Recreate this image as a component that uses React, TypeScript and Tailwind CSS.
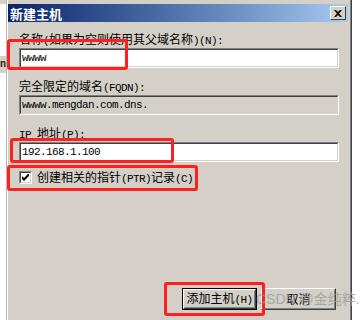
import React from "react";

const CJK = "font-['Noto_Sans_CJK_SC','Noto_Sans_CJK_JP',sans-serif]";

const Lat = ({ children }: { children: React.ReactNode }) => (
  <span className="font-['Liberation_Mono',monospace] text-[11px] tracking-[-0.6px]">{children}</span>
);

const Label = ({ children, className = "" }: { children: React.ReactNode; className?: string }) => (
  <div className={`${CJK} text-[12px] leading-[12px] h-[12px] text-black whitespace-nowrap ${className}`}>
    {children}
  </div>
);

const Field = ({
  value,
  disabled = false,
  className = "",
}: {
  value: string;
  disabled?: boolean;
  className?: string;
}) => (
  <div
    className={`w-[320px] h-[20px] border border-t-[#808080] border-l-[#808080] border-b-white border-r-white ${className}`}
  >
    <div
      className={`w-full h-full border border-t-[#404040] border-l-[#404040] border-b-[#d4d0c8] border-r-[#d4d0c8] ${
        disabled ? "bg-[#d4d0c8]" : "bg-white"
      } flex items-center pl-[1px]`}
    >
      <span className="font-['Liberation_Mono',monospace] text-[11px] tracking-[-0.6px] leading-[12px] text-black whitespace-nowrap">
        {value}
      </span>
    </div>
  </div>
);

export default function App() {
  return (
    <div className="relative w-[361px] h-[320px] bg-white overflow-hidden flex">
      {/* background window strip */}
      <div className="w-[7px] h-full flex flex-col bg-white border-r border-r-[#b8b8b8]">
        <div className="h-[4px] bg-[#d4d0c8]" />
        <div className="h-[52px]" />
        <div className="h-[17px] bg-[#d4d0c8] overflow-hidden flex items-center justify-end">
          <span className="font-['Liberation_Mono',monospace] text-[10px] font-bold text-[#202020] leading-[10px]">n</span>
        </div>
      </div>

      {/* dialog */}
      <div className="w-[345px] h-[340px] bg-[#d4d0c8] border-r border-r-[#404040]">
        <div className="w-full h-full border-l border-l-white border-r border-r-[#808080] pt-[4px] pr-[1px]">
          {/* title bar */}
          <div className="h-[18px] w-[340px] bg-gradient-to-r from-[#0a246a] to-[#a6caf0] flex items-center justify-between pl-[2px] pr-[2px]">
            <span className={`${CJK} text-[13px] leading-[13px] font-bold text-white`}>新建主机</span>
            <div className="w-[16px] h-[14px] bg-[#d4d0c8] border border-t-white border-l-white border-b-[#404040] border-r-[#404040] flex items-center justify-center">
              <svg width="8" height="7" viewBox="0 0 8 7">
                <path d="M0 0h2l2 2 2-2h2l-3 3.5 3 3.5h-2l-2-2-2 2h-2l3-3.5z" fill="#000" />
              </svg>
            </div>
          </div>

          {/* body */}
          <div className="pl-[11px] flex flex-col">
            <Label className="mt-[11px]">
              名称<Lat>(</Lat>如果为空则使用其父域名称<Lat>)(N):</Lat>
            </Label>
            <Field value="wwww" className="mt-[3px]" />

            <Label className="mt-[12px]">
              完全限定的域名<Lat>(FQDN):</Lat>
            </Label>
            <Field value="wwww.mengdan.com.dns." disabled className="mt-[3px]" />

            <Label className="mt-[12px]">
              <Lat>IP </Lat>地址<Lat>(P):</Lat>
            </Label>
            <Field value="192.168.1.100" className="mt-[3px]" />

            <div className="mt-[9px] flex items-center h-[13px]">
              <div className="w-[13px] h-[13px] border border-t-[#808080] border-l-[#808080] border-b-white border-r-white">
                <div className="w-full h-full bg-white border border-t-[#404040] border-l-[#404040] border-b-[#d4d0c8] border-r-[#d4d0c8] flex items-center justify-center">
                  <svg width="7" height="7" viewBox="0 0 7 7">
                    <path d="M0 2v3l2 2 5-5v-3l-5 5z" fill="#000" />
                  </svg>
                </div>
              </div>
              <span className={`${CJK} ml-[5px] text-[12px] leading-[12px] text-black whitespace-nowrap`}>
                创建相关的指针<Lat>(PTR)</Lat>记录<Lat>(C)</Lat>
              </span>
            </div>

            <div className="mt-[104px] ml-[163px] flex gap-[4px]">
              <div className="w-[75px] h-[22px] border border-black">
                <div className="w-full h-full border border-t-white border-l-white border-b-[#404040] border-r-[#404040]">
                  <div className="w-full h-full border border-t-[#d4d0c8] border-l-[#d4d0c8] border-b-[#808080] border-r-[#808080] flex items-center justify-center">
                    <span className={`${CJK} text-[12px] leading-[12px] text-black whitespace-nowrap`}>
                      添加主机<Lat>(H)</Lat>
                    </span>
                  </div>
                </div>
              </div>
              <div className="w-[75px] h-[22px] border border-t-white border-l-white border-b-[#404040] border-r-[#404040]">
                <div className="w-full h-full border border-t-[#d4d0c8] border-l-[#d4d0c8] border-b-[#808080] border-r-[#808080] flex items-center justify-center">
                  <span className={`${CJK} text-[12px] leading-[12px] text-black whitespace-nowrap`}>取消</span>
                </div>
              </div>
            </div>
          </div>
        </div>
      </div>

      {/* annotation red boxes */}
      <div className="absolute left-[7px] top-[39px] w-[121px] h-[31px] border-[3px] border-[#ff1f1f] rounded-[3px]" />
      <div className="absolute left-[10px] top-[138px] w-[164px] h-[25px] border-[3px] border-[#ff1f1f] rounded-[3px]" />
      <div className="absolute left-[7px] top-[165px] w-[191px] h-[26px] border-[3px] border-[#ff1f1f] rounded-[3px]" />
      <div className="absolute left-[164px] top-[282px] w-[101px] h-[34px] border-[3px] border-[#ff1f1f] rounded-[3px]" />

      {/* watermark */}
      <div className="absolute left-[256px] top-[291px] text-[14px] leading-[16px] text-[#9a9a9a] opacity-75 whitespace-nowrap font-['Liberation_Sans','Noto_Sans_CJK_SC',sans-serif]">
        CSDN @金纯粹.
      </div>
    </div>
  );
}
